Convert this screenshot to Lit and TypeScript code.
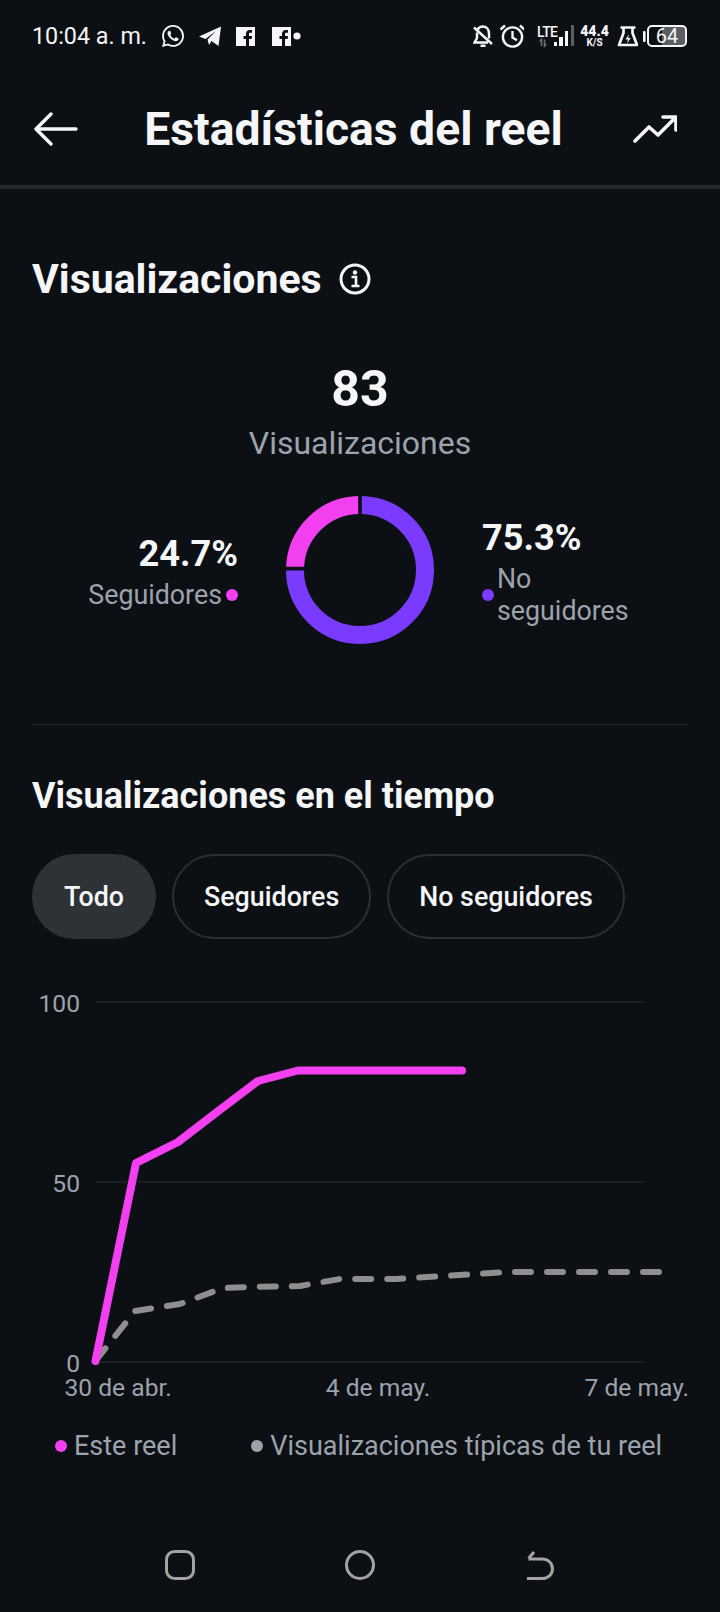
import { LitElement, html, css, svg } from "lit";
import { customElement, state } from "lit/decorators.js";

const PINK = "#f23ff0";
const PURPLE = "#7a3bff";

// points are in page coordinates, the chart's viewBox starts at y=980
const REEL = "95.5,1361 136,1163 178,1142 217,1112 258,1081 298,1070.5 462,1070.5";
const TYPICAL = "95.5,1361 135,1311 180,1304 223,1288 247,1287 300,1286 340,1279 396,1279 507,1272 663,1272";

function arc(cx: number, cy: number, r: number, from: number, to: number) {
  const pt = (f: number) => {
    const a = f * Math.PI * 2 - Math.PI / 2;
    return `${cx + r * Math.cos(a)} ${cy + r * Math.sin(a)}`;
  };
  const large = to - from > 0.5 ? 1 : 0;
  return `M${pt(from)} A${r} ${r} 0 ${large} 1 ${pt(to)}`;
}

@customElement("app-root")
export class AppRoot extends LitElement {
  static styles = css`
    :host {
      display: flex;
      flex-direction: column;
      width: 720px;
      height: 1612px;
      background: #0c1014;
      color: #f5f6f7;
      font-family: Roboto, "Noto Sans", sans-serif;
      overflow: hidden;
    }
    svg {
      display: block;
      flex: none;
    }
    .status {
      display: flex;
      align-items: center;
      justify-content: space-between;
      height: 72px;
      padding: 0 33px 0 32px;
      box-sizing: border-box;
    }
    .status-left {
      display: flex;
      align-items: center;
      gap: 15px;
    }
    .status-right {
      display: flex;
      align-items: center;
      gap: 5px;
    }
    .time {
      font-size: 23.3px;
      width: 115px;
      white-space: nowrap;
    }
    .fb-dot {
      display: flex;
      align-items: center;
      gap: 2px;
    }
    .speed {
      width: 30px;
      display: flex;
      flex-direction: column;
      align-items: flex-end;
      font-weight: 700;
      line-height: 1;
    }
    .speed b {
      font-size: 14px;
      width: 29px;
      text-align: center;
    }
    .speed span {
      font-size: 10px;
      width: 29px;
      text-align: center;
    }
    .appbar {
      display: flex;
      align-items: center;
      justify-content: space-between;
      height: 113px;
      padding: 0 43px 0 34px;
      border-bottom: 4px solid #24272b;
    }
    .title {
      margin-right: 4px;
      font-size: 46.3px;
      font-weight: 700;
      white-space: nowrap;
    }
    .views {
      padding: 0 32px;
    }
    .h2 {
      display: flex;
      align-items: center;
      gap: 17px;
      margin-top: 66px;
      font-size: 41px;
      font-weight: 700;
      line-height: 48px;
    }
    .total {
      text-align: center;
      margin-top: 58px;
      font-size: 50px;
      font-weight: 700;
      line-height: 56px;
    }
    .total-label {
      text-align: center;
      margin-top: 6px;
      font-size: 32px;
      color: #9ca3ad;
      line-height: 40px;
    }
    .split {
      display: flex;
      align-items: center;
      justify-content: center;
      margin-top: 33px;
      padding-bottom: 80px;
      border-bottom: 1px solid #24272b;
    }
    .side {
      width: 206px;
      padding-top: 3px;
      box-sizing: border-box;
    }
    .side.left {
      padding-right: 48px;
      text-align: right;
    }
    .side.right {
      padding-left: 48px;
    }
    .pct {
      font-size: 36.2px;
      font-weight: 700;
      line-height: 44px;
    }
    .side-label {
      display: flex;
      align-items: center;
      gap: 3px;
      margin-top: 3px;
      font-size: 26.8px;
      line-height: 32px;
      color: #9ca3ad;
    }
    .side.left .side-label {
      justify-content: flex-end;
      gap: 4px;
    }
    .dot {
      flex: none;
      width: 12px;
      height: 12px;
      border-radius: 50%;
    }
    .over-time {
      padding: 0 32px;
    }
    .over-time .h2 {
      margin-top: 47px;
      font-size: 36px;
    }
    .pills {
      display: flex;
      gap: 16px;
      margin-top: 34px;
    }
    .pill {
      display: flex;
      align-items: center;
      height: 85px;
      padding: 1px 30px 0;
      box-sizing: border-box;
      border-radius: 43px;
      border: 2px solid #2b2f33;
      font-size: 26.8px;
      font-weight: 500;
    }
    .pill.on {
      background: #2d3237;
      border-color: #2d3237;
    }
    .chart {
      margin-top: 41px;
    }
    .chart text {
      font-size: 24.6px;
      fill: #9ca3ad;
    }
    .legend {
      display: flex;
      align-items: center;
      height: 52px;
      padding-left: 55px;
      font-size: 27px;
      color: #9ca3ad;
    }
    .legend .dot {
      margin-right: 7px;
    }
    .legend .typical {
      margin-left: 74px;
    }
    .nav {
      display: flex;
      justify-content: center;
      gap: 150px;
      margin-top: 78px;
    }
  `;

  @state() private filters = ["Todo", "Seguidores", "No seguidores"];
  @state() private selected = "Todo";

  private leftIcons() {
    return html`
      <svg width="22" height="24" viewBox="0 0 24 24" fill="#f5f6f7"><path d="M17.472 14.382c-.297-.149-1.758-.867-2.03-.967-.273-.099-.471-.148-.67.15-.197.297-.767.966-.94 1.164-.173.199-.347.223-.644.075-.297-.15-1.255-.463-2.39-1.475-.883-.788-1.48-1.761-1.653-2.059-.173-.297-.018-.458.13-.606.134-.133.298-.347.446-.52.149-.174.198-.298.298-.497.099-.198.05-.371-.025-.52-.075-.149-.669-1.612-.916-2.207-.242-.579-.487-.5-.669-.51-.173-.008-.371-.01-.57-.01-.198 0-.52.074-.792.372-.272.297-1.04 1.016-1.04 2.479 0 1.462 1.065 2.875 1.213 3.074.149.198 2.096 3.2 5.077 4.487.709.306 1.262.489 1.694.625.712.227 1.36.195 1.871.118.571-.085 1.758-.719 2.006-1.413.248-.694.248-1.289.173-1.413-.074-.124-.272-.198-.57-.347m-5.421 7.403h-.004a9.87 9.87 0 01-5.031-1.378l-.361-.214-3.741.982.998-3.648-.235-.374a9.86 9.86 0 01-1.51-5.26c.001-5.45 4.436-9.884 9.888-9.884 2.64 0 5.122 1.03 6.988 2.898a9.825 9.825 0 012.893 6.994c-.003 5.45-4.437 9.884-9.885 9.884m8.413-18.297A11.815 11.815 0 0012.05 0C5.495 0 .16 5.335.157 11.892c0 2.096.547 4.142 1.588 5.945L.057 24l6.305-1.654a11.882 11.882 0 005.683 1.448h.005c6.554 0 11.89-5.335 11.893-11.893a11.821 11.821 0 00-3.48-8.413Z"/></svg>
      <svg width="22" height="20" viewBox="0 0 22 20" fill="#f5f6f7"><path d="M0 10.5 22 .5 19.5 20 12.5 15 10 19 8.5 13.5 17 5 6.5 13Z"/></svg>
      ${this.fb(21)}
      <div class="fb-dot">
        ${this.fb(19)}<svg width="8" height="8" viewBox="0 0 8 8" fill="#f5f6f7"><circle cx="4" cy="4" r="3.6"/></svg>
      </div>
    `;
  }

  private fb(w: number) {
    return html`<svg width=${w} height="19" viewBox="0 0 ${w} 19" fill="#f5f6f7"><path fill-rule="evenodd" d="M0 0H19V19H0ZM13 19V12H15.6L16 9H13V7.2C13 6.3 13.3 5.8 14.4 5.8H16V3.1C15.7 3.1 14.8 3 13.8 3 11.6 3 10 4.3 10 6.8V9H7.5V12H10V19Z"/></svg>`;
  }

  private rightIcons() {
    return html`
      <svg width="20" height="24" viewBox="0 0 20 24" fill="none" stroke="#f5f6f7" stroke-width="2.5">
        <path d="M4.5 5.5C5.8 3.5 7.8 2.5 10 2.5 14 2.5 16 5.8 16 10V14.5M4 8.5V14L1.5 18.5H15"/>
        <path d="M7.5 21.8H12.5M1 3.5 19 20"/>
      </svg>
      <svg width="26" height="24" viewBox="-3 0 26 24" fill="none" stroke="#f5f6f7" stroke-width="2.4">
        <circle cx="11.5" cy="13" r="9.6"/>
        <path d="M11.5 7V13.5L16 16.2M-.5 5.5 4 1.5M23.5 5.5 19 1.5"/>
      </svg>
      <svg width="45" height="24" viewBox="0 0 45 24">
        <text x="8" y="13" font-size="14" font-family="Roboto" font-weight="500" fill="#f5f6f7" textLength="21">LTE</text>
        <path d="M12.5 22V15.5L10.8 17.5M15.5 15.5V22L17.2 20" fill="none" stroke="#6c6f72" stroke-width="1.6"/>
        <path d="M25 18H28V22H25ZM30 13H34V22H30ZM36 7H39V22H36Z" fill="#f5f6f7"/>
        <path d="M42 1H45V22H42Z" fill="#5c5f62"/>
      </svg>
      <div class="speed"><b>44.4</b><span>K/S</span></div>
      <svg width="24" height="24" viewBox="-4 0 24 24" fill="none" stroke="#f5f6f7" stroke-width="2.7" stroke-linejoin="round">
        <path d="M2.5 3.5H17.5M5.5 3.5V9L1 21H19L14.5 9V3.5"/>
        <path d="M10.8 10.5 7.5 15.5H10L9 19.5 12.8 14H10.2Z" fill="#f5f6f7" stroke="none"/>
      </svg>
      <svg width="44" height="24" viewBox="0 0 44 24">
        <rect x="0" y="7" width="2.6" height="11" rx="1" fill="#f5f6f7"/>
        <rect x="19" y="3" width="23" height="18" fill="#5a5e62"/>
        <rect x="5" y="2" width="38" height="20" rx="4" fill="none" stroke="#f5f6f7" stroke-width="2"/>
        <text x="24" y="18.5" font-size="20" font-family="Roboto" fill="#f5f6f7" text-anchor="middle">64</text>
      </svg>
    `;
  }

  private donut() {
    const split = 0.753;
    return html`<svg width="148" height="148" viewBox="286 495 148 148" fill="none">
      <path d=${arc(360, 569, 65, 0, split)} stroke=${PURPLE} stroke-width="18"/>
      <path d=${arc(360, 569, 65, split, 1)} stroke=${PINK} stroke-width="18"/>
      <path d="M360 490V515M280 567.6H312" stroke="#0c1014" stroke-width="3.6"/>
    </svg>`;
  }

  private chart() {
    const grid = [1002, 1182, 1362];
    return html`<svg class="chart" width="720" height="440" viewBox="0 980 720 440" fill="none">
      ${grid.map((y) => svg`<path d="M96 ${y}H644" stroke="#1a1d21" stroke-width="2"/>`)}
      <text x="80" y="1012" text-anchor="end">100</text>
      <text x="80" y="1192" text-anchor="end">50</text>
      <text x="80" y="1372" text-anchor="end">0</text>
      <text x="64.5" y="1396">30 de abr.</text>
      <text x="378" y="1396" text-anchor="middle">4 de may.</text>
      <text x="689" y="1396" text-anchor="end">7 de may.</text>
      <polyline points=${TYPICAL} stroke="#8f8f8f" stroke-width="6" stroke-linecap="round" stroke-linejoin="round" stroke-dasharray="16 16"/>
      <polyline points=${REEL} stroke=${PINK} stroke-width="8" stroke-linecap="round" stroke-linejoin="round"/>
    </svg>`;
  }

  render() {
    return html`
      <div class="status">
        <div class="status-left">
          <span class="time">10:04 a. m.</span>
          ${this.leftIcons()}
        </div>
        <div class="status-right">${this.rightIcons()}</div>
      </div>

      <div class="appbar">
        <svg width="44" height="34" viewBox="0 0 44 34" fill="none" stroke="#f5f6f7" stroke-width="3.4" stroke-linecap="round" stroke-linejoin="round">
          <path d="M42 17H2M17 2 2 17 17 32"/>
        </svg>
        <div class="title">Estadísticas del reel</div>
        <svg width="44" height="28" viewBox="0 0 44 28" fill="none" stroke="#f5f6f7" stroke-width="3.6" stroke-linecap="round" stroke-linejoin="round">
          <path d="M2 26 16 12 25 20 42 3M30 2H43V15"/>
        </svg>
      </div>

      <div class="views">
        <div class="h2">
          Visualizaciones
          <svg width="32" height="32" viewBox="0 0 32 32" fill="none">
            <circle cx="16" cy="16" r="14" stroke="#f5f6f7" stroke-width="3"/>
            <circle cx="16" cy="9.5" r="2.2" fill="#f5f6f7"/>
            <path d="M12.5 14H17V22M12.5 23H20.5" stroke="#f5f6f7" stroke-width="2.6"/>
          </svg>
        </div>
        <div class="total">83</div>
        <div class="total-label">Visualizaciones</div>
        <div class="split">
          <div class="side left">
            <div class="pct">24.7%</div>
            <div class="side-label">Seguidores<span class="dot" style="background:${PINK}"></span></div>
          </div>
          ${this.donut()}
          <div class="side right">
            <div class="pct">75.3%</div>
            <div class="side-label"><span class="dot" style="background:${PURPLE}"></span><span>No seguidores</span></div>
          </div>
        </div>
      </div>

      <div class="over-time">
        <div class="h2">Visualizaciones en el tiempo</div>
        <div class="pills">
          ${this.filters.map((f) => html`<div class="pill ${f === this.selected ? "on" : ""}">${f}</div>`)}
        </div>
      </div>

      ${this.chart()}

      <div class="legend">
        <span class="dot" style="background:${PINK}"></span>Este reel
        <span class="dot typical" style="background:#9ca3ad"></span>Visualizaciones típicas de tu reel
      </div>

      <div class="nav">
        <svg width="30" height="30" viewBox="0 0 30 30" fill="none" stroke="#a3a3a3" stroke-width="3"><rect x="1.5" y="1.5" width="27" height="27" rx="8"/></svg>
        <svg width="30" height="30" viewBox="0 0 30 30" fill="none" stroke="#a3a3a3" stroke-width="3"><circle cx="15" cy="15" r="13.5"/></svg>
        <svg width="30" height="30" viewBox="0 0 30 30" fill="none" stroke="#a3a3a3" stroke-width="3" stroke-linejoin="round"><path d="M2 28.5H17C23 28.5 27.5 24.5 27.5 19 27.5 13 23 9 17 9H3.5M9 2 3.5 8.5"/></svg>
      </div>
    `;
  }
}
